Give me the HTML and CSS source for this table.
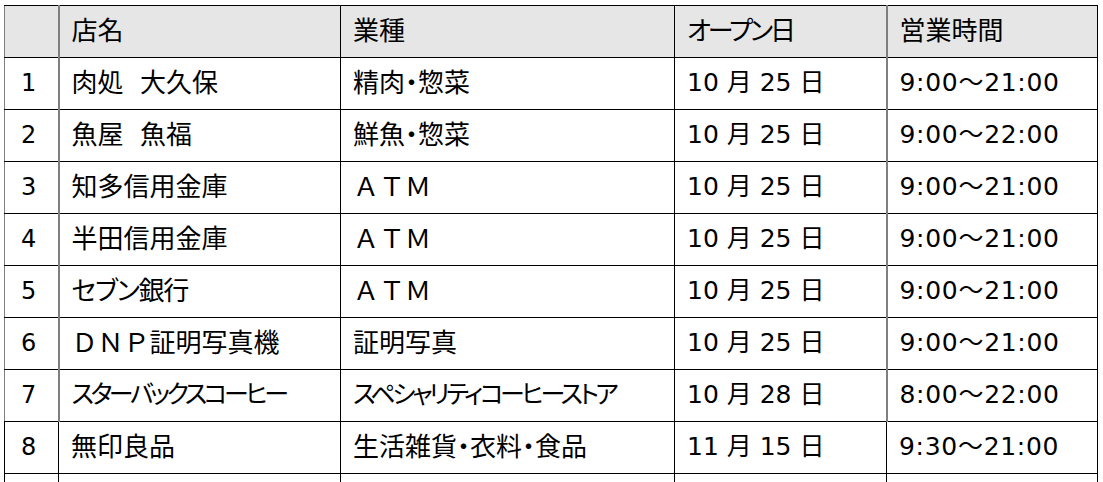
FILE: index.html
```html
<!DOCTYPE html>
<html lang="ja">
<head>
<meta charset="utf-8">
<link rel="stylesheet" href="styles.css">
</head>
<body>
<table class="shops">
  <colgroup>
    <col class="c-no"><col class="c-name"><col class="c-type"><col class="c-open"><col class="c-hours">
  </colgroup>
  <thead>
    <tr><th class="g-left"></th><th class="g-left">店名</th><th>業種</th><th class="head-kana">オープン日</th><th class="g-left">営業時間</th></tr>
  </thead>
  <tbody>
    <tr><td class="g-left num">1</td><td class="g-left">肉処&nbsp;&nbsp;大久保</td><td class="p">精肉・惣菜</td><td class="date">10 月 25 日</td><td class="g-left time">9:00～21:00</td></tr>
    <tr><td class="g-left num">2</td><td class="g-left">魚屋&nbsp;&nbsp;魚福</td><td class="p">鮮魚・惣菜</td><td class="date">10 月 25 日</td><td class="g-left time">9:00～22:00</td></tr>
    <tr><td class="g-left num">3</td><td class="g-left">知多信用金庫</td><td>ＡＴＭ</td><td class="date">10 月 25 日</td><td class="g-left time">9:00～21:00</td></tr>
    <tr><td class="g-left num">4</td><td class="g-left">半田信用金庫</td><td>ＡＴＭ</td><td class="date">10 月 25 日</td><td class="g-left time">9:00～21:00</td></tr>
    <tr><td class="g-left num">5</td><td class="g-left kana-s">セブン銀行</td><td>ＡＴＭ</td><td class="date">10 月 25 日</td><td class="g-left time">9:00～21:00</td></tr>
    <tr><td class="g-left num">6</td><td class="g-left">ＤＮＰ証明写真機</td><td>証明写真</td><td class="date">10 月 25 日</td><td class="g-left time">9:00～21:00</td></tr>
    <tr><td class="g-left num">7</td><td class="g-left kana">スターバックスコーヒー</td><td class="kana">スペシャリティコーヒーストア</td><td class="date">10 月 28 日</td><td class="g-left time">8:00～22:00</td></tr>
    <tr><td class="num">8</td><td>無印良品</td><td class="p">生活雑貨・衣料・食品</td><td class="date">11 月 15 日</td><td class="time">9:30～21:00</td></tr>
    <tr class="filler"><td></td><td></td><td></td><td></td><td></td></tr>
  </tbody>
</table>
</body>
</html>
```

FILE: styles.css
```css
html, body {
  margin: 0;
  padding: 0;
  background: #ffffff;
  overflow: hidden;
}

body {
  padding: 5px 0 0 4px;
  font-family: "DejaVu Sans", "Noto Sans CJK JP", sans-serif;
  font-size: 26px;
  color: #000000;
}

.shops {
  border-collapse: collapse;
  table-layout: fixed;
  width: 1093px;
}

.c-no { width: 54px; }
.c-name { width: 282px; }
.c-type { width: 334px; }
.c-open { width: 212px; }
.c-hours { width: 211px; }

.shops th,
.shops td {
  height: 52px;
  padding: 0 0 2px 12px;
  box-sizing: border-box;
  text-align: left;
  font-weight: normal;
  vertical-align: middle;
  line-height: 30px;
  border: 1px solid #000000;
  white-space: nowrap;
  overflow: hidden;
}

.shops th {
  background: #e6e6e6;
}

.shops td.num {
  padding-left: 16px;
  font-size: 24px;
}

.shops .g-left {
  border-left: 2px solid #7f7f7f;
}

.shops tr > :first-child.g-left {
  border-left: 1px solid #7f7f7f;
}

.shops .p {
  font-feature-settings: "palt" 1;
}

.shops .date {
  font-size: 25px;
}

.shops .time {
  font-size: 25px;
  letter-spacing: 0.7px;
}

.shops .kana {
  font-size: 25px;
  letter-spacing: -3.4px;
  font-feature-settings: "palt" 1;
}

.shops .kana-s {
  letter-spacing: -1.2px;
  font-feature-settings: "palt" 1;
}

.shops .head-kana {
  letter-spacing: -3px;
  font-feature-settings: "palt" 1;
}

.shops .filler td {
  height: 9px;
  padding: 0;
  line-height: 0;
  border-bottom: none;
}
```
